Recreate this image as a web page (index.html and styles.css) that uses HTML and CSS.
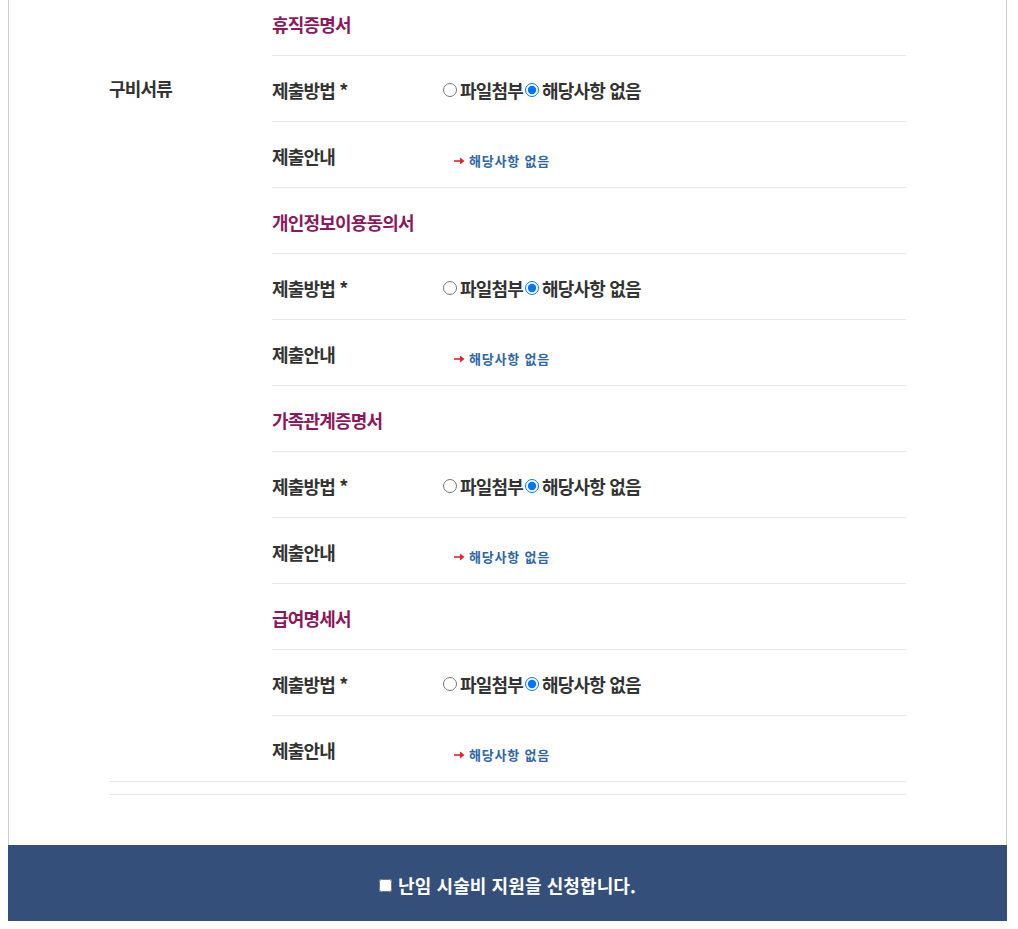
FILE: index.html
```html
<!DOCTYPE html>
<html lang="ko">
<head>
<meta charset="utf-8">
<title>구비서류</title>
<link rel="stylesheet" href="styles.css">
</head>
<body>
<div class="page">
  <div class="content">
    <div class="docs">
      <div class="docs-head">구비서류</div>
      <div class="docs-body">
        <div class="row doc-title">휴직증명서</div>
        <div class="row">
          <div class="label">제출방법 *</div>
          <div class="value"><label><input type="radio" name="d1">파일첨부</label><label><input type="radio" name="d1" checked>해당사항 없음</label></div>
        </div>
        <div class="row">
          <div class="label">제출안내</div>
          <div class="value"><span class="notice"><svg class="arrow" width="11" height="8" viewBox="0 0 11 8"><path d="M0 3.2H6.5V4.8H0Z" fill="#e3232b"/><path d="M6 0.5L10.5 4L6 7.5Z" fill="#e3232b"/></svg>해당사항 없음</span></div>
        </div>
        <div class="row doc-title">개인정보이용동의서</div>
        <div class="row">
          <div class="label">제출방법 *</div>
          <div class="value"><label><input type="radio" name="d2">파일첨부</label><label><input type="radio" name="d2" checked>해당사항 없음</label></div>
        </div>
        <div class="row">
          <div class="label">제출안내</div>
          <div class="value"><span class="notice"><svg class="arrow" width="11" height="8" viewBox="0 0 11 8"><path d="M0 3.2H6.5V4.8H0Z" fill="#e3232b"/><path d="M6 0.5L10.5 4L6 7.5Z" fill="#e3232b"/></svg>해당사항 없음</span></div>
        </div>
        <div class="row doc-title">가족관계증명서</div>
        <div class="row">
          <div class="label">제출방법 *</div>
          <div class="value"><label><input type="radio" name="d3">파일첨부</label><label><input type="radio" name="d3" checked>해당사항 없음</label></div>
        </div>
        <div class="row">
          <div class="label">제출안내</div>
          <div class="value"><span class="notice"><svg class="arrow" width="11" height="8" viewBox="0 0 11 8"><path d="M0 3.2H6.5V4.8H0Z" fill="#e3232b"/><path d="M6 0.5L10.5 4L6 7.5Z" fill="#e3232b"/></svg>해당사항 없음</span></div>
        </div>
        <div class="row doc-title">급여명세서</div>
        <div class="row">
          <div class="label">제출방법 *</div>
          <div class="value"><label><input type="radio" name="d4">파일첨부</label><label><input type="radio" name="d4" checked>해당사항 없음</label></div>
        </div>
        <div class="row last">
          <div class="label">제출안내</div>
          <div class="value"><span class="notice"><svg class="arrow" width="11" height="8" viewBox="0 0 11 8"><path d="M0 3.2H6.5V4.8H0Z" fill="#e3232b"/><path d="M6 0.5L10.5 4L6 7.5Z" fill="#e3232b"/></svg>해당사항 없음</span></div>
        </div>
      </div>
    </div>
    <div class="docs-end"></div>
  </div>
  <div class="apply"><label><input type="checkbox">난임 시술비 지원을 신청합니다.</label></div>
</div>
</body>
</html>
```

FILE: styles.css
```css
body {
  margin: 0;
  background: #fff;
  font-family: "Noto Sans CJK KR", "Noto Sans", sans-serif;
  color: #333;
}
.page {
  margin: -10px 0 0 8px;
  width: 999px;
  box-sizing: border-box;
}
.content {
  border-left: 1px solid #cfcfcf;
  border-right: 1px solid #cfcfcf;
  padding: 0 100px 50px;
}
.docs {
  display: grid;
  grid-template-columns: 163px 1fr;
  border-bottom: 1px solid #e8e8e8;
}
.docs-head {
  padding-top: 66px;
  line-height: 65px;
  font-size: 18px;
  font-weight: 700;
  letter-spacing: -0.8px;
  color: #333;
}
.row {
  display: flex;
  align-items: center;
  height: 65px;
  border-bottom: 1px solid #e8e8e8;
  font-size: 18px;
  font-weight: 700;
  letter-spacing: -0.8px;
}
.row.last {
  border-bottom: none;
}
.doc-title {
  color: #8a1a5c;
  height: 63px;
  padding-top: 2px;
}
.label {
  width: 166px;
  flex: none;
  padding-top: 2px;
}
.value {
  display: flex;
  align-items: center;
  padding-top: 2px;
}
.value label {
  display: inline-flex;
  align-items: center;
}
.value input[type="radio"] {
  margin: 0 3px 0 5px;
  width: 14px;
  height: 14px;
}
.value label + label input[type="radio"] {
  margin-left: 2px;
}
.notice {
  display: inline-flex;
  align-items: center;
  margin: 10px 0 0 16px;
  font-size: 13px;
  letter-spacing: 0.8px;
  color: #2f66a6;
}
.arrow {
  margin-right: 4px;
}
.docs-end {
  height: 12px;
  border-bottom: 1px solid #e8e8e8;
}
.apply {
  background: #354f7b;
  height: 76px;
  display: flex;
  align-items: center;
  justify-content: center;
  color: #fff;
  font-size: 18px;
  font-weight: 700;
  letter-spacing: 0.1px;
  padding-top: 4px;
  box-sizing: border-box;
}
.apply label {
  display: inline-flex;
  align-items: center;
}
.apply input {
  margin: 0 6px 0 0;
  width: 13px;
  height: 13px;
}
```
